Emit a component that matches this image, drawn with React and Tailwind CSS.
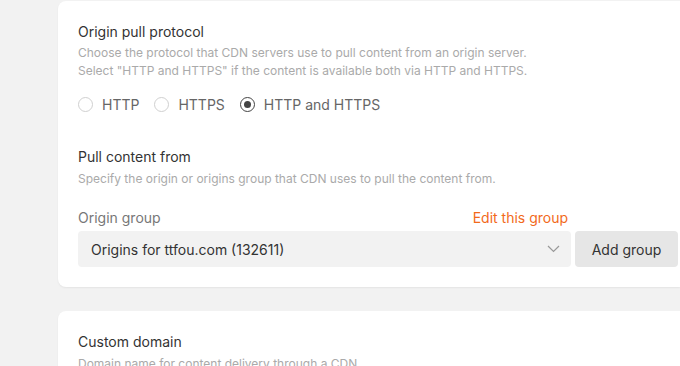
import React from "react";

const Radio = ({ label, checked }) => (
  <label className="flex items-center gap-[9px] mr-[15px]">
    <span
      className={`w-[15px] h-[15px] rounded-full border flex items-center justify-center bg-white ${
        checked ? "border-[#444]" : "border-[#d0d0d0]"
      }`}
    >
      {checked && <span className="w-[7px] h-[7px] rounded-full bg-[#444]"></span>}
    </span>
    <span className="text-[14px] text-[#666]">{label}</span>
  </label>
);

export default function App() {
  return (
    <div className="min-h-[366px] h-[366px] overflow-hidden bg-[#f2f2f2] pl-[58px] pt-px font-['Inter',sans-serif]">
      {/* Origin pull protocol */}
      <div className="bg-white rounded-l-lg shadow-[0_1px_2px_rgba(0,0,0,0.06)] pl-[20px] pt-[20px] pb-[20px] pr-[2px]">
        <h3 className="text-[14px] leading-[22px] text-[#333]">Origin pull protocol</h3>
        <p className="text-[12px] leading-[18px] text-[#aaa] mt-[1px]">
          Choose the protocol that CDN servers use to pull content from an origin server.
          <br />
          Select "HTTP and HTTPS" if the content is available both via HTTP and HTTPS.
        </p>
        <div className="flex items-center mt-[14px] h-[20px]">
          <Radio label="HTTP" />
          <Radio label="HTTPS" />
          <Radio label="HTTP and HTTPS" checked />
        </div>

        {/* Pull content from */}
        <h3 className="text-[14px] leading-[22px] text-[#333] mt-[32px]">Pull content from</h3>
        <p className="text-[12px] leading-[18px] text-[#aaa] mt-[2px]">
          Specify the origin or origins group that CDN uses to pull the content from.
        </p>
        <div className="flex items-center justify-between w-[490px] mt-[19px] h-[20px]">
          <span className="text-[14px] text-[#777]">Origin group</span>
          <span className="text-[14px] text-[#f26a1b]">Edit this group</span>
        </div>
        <div className="flex items-center gap-[4px] mt-[4px]">
          <div className="w-[493px] h-[36px] rounded bg-[#f2f2f2] flex items-center justify-between pl-[13px] pr-[11px]">
            <span className="text-[14px] text-[#333]">Origins for ttfou.com (132611)</span>
            <svg width="13" height="8" viewBox="0 0 13 8" fill="none">
              <path d="M1 1l5.5 5.5L12 1" stroke="#999" strokeWidth="1.2" />
            </svg>
          </div>
          <button className="w-[103px] h-[36px] rounded bg-[#e6e6e6] text-[14px] text-[#333]">
            Add group
          </button>
        </div>
      </div>

      {/* Custom domain */}
      <div className="bg-white rounded-l-lg shadow-[0_1px_2px_rgba(0,0,0,0.06)] pl-[20px] pt-[20px] pb-[20px] mt-[24px]">
        <h3 className="text-[14px] leading-[22px] text-[#333]">Custom domain</h3>
        <p className="text-[12px] leading-[18px] text-[#aaa] mt-[2px]">
          Domain name for content delivery through a CDN.
        </p>
      </div>
    </div>
  );
}
